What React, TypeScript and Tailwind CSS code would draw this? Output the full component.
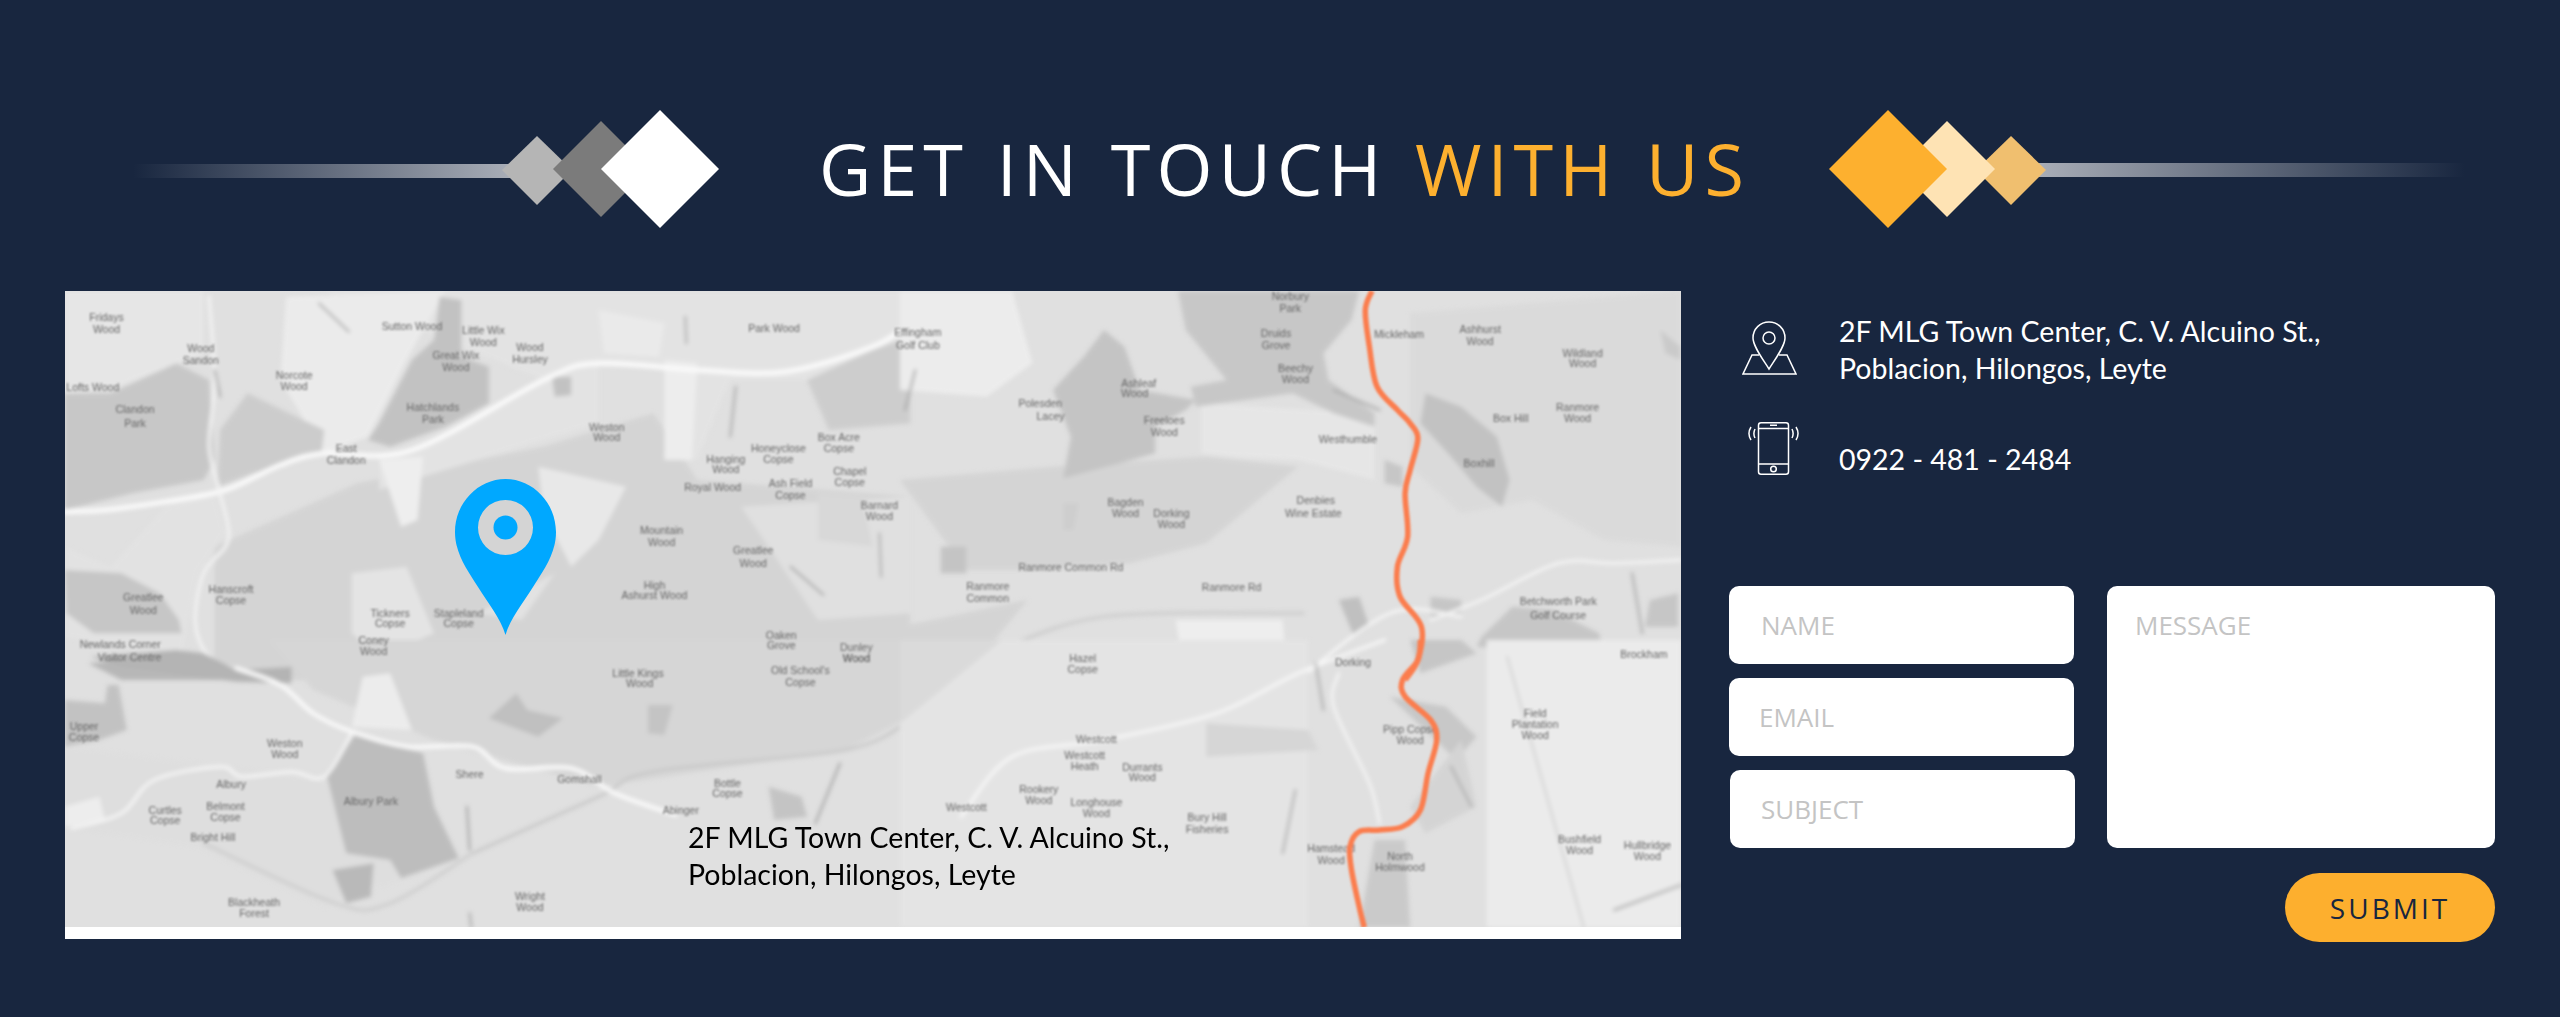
// catmull-rom through the traced points so roads don't look angular
const smooth = (pts: string) => {
  const p = pts.trim().split(" ").map(s => s.split(",").map(Number))
  let d = `M${p[0][0]} ${p[0][1]}`
  for (let i = 0; i < p.length - 1; i++) {
    const a = p[i - 1] || p[i], b = p[i], c = p[i + 1], e = p[i + 2] || c
    d += `C${b[0] + (c[0] - a[0]) / 6} ${b[1] + (c[1] - a[1]) / 6} ${c[0] - (e[0] - b[0]) / 6} ${c[1] - (e[1] - b[1]) / 6} ${c[0]} ${c[1]}`
  }
  return d
}

// map shapes are traced per quadrant, each group has its own scale
const Q1 = "translate(50 280) scale(.5486 .3333)"
const Q2 = "translate(900 280) scale(.5102 .3333)"
const Q3 = "translate(50 640) scale(.5486 .3333)"
const Q4 = "translate(900 640) scale(.5102 .3333)"

type Shape = [string, string]

const q1Fill: Shape[] = [
  ["#d4d4d4", "300,800 560,610 900,500 1100,400 1180,600 1568,650 1568,1200 300,1200"],
  ["#e3e3e3", "500,33 1568,33 1568,170 1380,300 1240,300 1180,540 1120,540 1130,260 1000,260 1000,430 600,630 600,520 660,510 900,300"],
  ["#e0e0e0", "1260,680 1568,650 1568,1000 1400,1020"],
  ["#e6e6e6", "27,33 280,33 280,220 110,330 27,340"],
  ["#ebebeb", "430,50 720,33 650,240 580,470 500,520 420,300"],
  ["#ededed", "1120,240 1180,250 1170,540 1120,540"],
  ["#eeeeee", "600,540 680,530 670,720 640,740"],
  ["#e8e8e8", "890,560 1050,620 1000,780 950,860 900,700"],
  ["#e2e2e2", "780,1000 920,880 860,1020"],
  ["#e4e4e4", "550,880 650,860 700,1060 600,1130 550,1060"],
  ["#e2e2e2", "27,800 110,860 210,680 300,640 320,760 270,880 240,1130 27,1070"],
  ["#c7c7c7", "27,340 110,340 230,250 290,300 300,540 280,600 150,640 27,690"],
  ["#cccccc", "360,340 500,450 495,520 370,580 305,620 310,450"],
  ["#c2c2c2", "710,50 750,60 750,230 800,260 800,370 720,440 620,500 580,480 600,430 660,240 700,180"],
  ["#c6c6c6", "27,870 130,880 200,940 235,1020 240,1060 80,1060 30,1000"],
  ["#b7b7b7", "70,1150 230,1130 290,1130 340,1170 440,1160 440,1200 130,1200"],
  ["#cdcdcd", "1380,300 1500,210 1568,170 1568,430 1420,450"],
  ["#c2c2c2", "915,290 950,290 950,345 920,350"],
  ["#eaeaea", "1000,90 1120,130 1110,230 1010,220"],
  ["#d8d8d8", "1400,640 1480,650 1500,800 1400,780"],
]
const q1Road: [string, number, string][] = [
  ["#fafafa", 5, "27,695 100,690 210,665 320,630 420,555 500,520 660,510 900,300 1000,250 1180,270 1340,275 1500,200 1568,130"],
  ["#f4f4f4", 3, "290,50 300,300 290,500 310,640 325,780 280,880 265,1030 290,1130 340,1170"],
  ["#a8a8a8", 2, "490,70 545,155"],
  ["#a0a0a0", 2, "300,270 310,350"],
  ["#a8a8a8", 2, "1250,320 1240,470"],
  ["#a8a8a8", 2, "1158,110 1160,190"],
  ["#a8a8a8", 2, "1512,760 1515,890"],
  ["#a0a0a0", 2, "1350,860 1410,945"],
]

const q2Fill: Shape[] = [
  ["#d4d4d4", "0,600 130,870 230,870 450,850 600,790 780,560 600,530 300,560"],
  ["#d4d4d4", "0,1040 250,960 120,1200 0,1200"],
  ["#ececec", "0,33 220,33 260,250 170,350 0,330"],
  ["#eeeeee", "540,1020 750,1020 760,1200 560,1200"],
  ["#e6e6e6", "590,370 930,400 930,600 780,540 650,530 590,520"],
  ["#dadada", "1000,100 1531,33 1531,800 1380,780 1240,660 1100,700 1000,560"],
  ["#ececec", "1180,1100 1531,1100 1531,1200 1180,1200"],
  ["#c7c7c7", "545,33 900,33 885,120 830,220 840,300 930,400 930,440 850,400 770,340 580,380 570,320 640,300 560,150"],
  ["#c4c4c4", "400,150 440,200 470,330 580,360 560,390 500,440 500,520 430,550 320,595 335,470 300,330 360,230"],
  ["#c2c2c2", "1030,340 1100,380 1170,470 1195,600 1180,680 1130,620 1080,530 1020,430"],
  ["#c6c6c6", "1140,1070 1200,980 1280,990 1370,1060 1380,1120 1130,1100"],
  ["#cacaca", "1490,150 1530,200 1530,240 1500,220"],
  ["#c6c6c6", "950,540 985,560 985,620 950,610"],
  ["#c6c6c6", "1040,950 1100,960 1100,1000 1040,1010"],
  ["#c4c4c4", "80,800 130,800 130,880 80,880"],
  ["#c6c6c6", "1470,960 1525,940 1525,1040 1460,1040"],
  ["#c0c0c0", "860,960 900,950 920,1040 890,1070"],
  ["#cecece", "320,670 350,670 340,750 320,750"],
]
const q2Road: [string, number, string][] = [
  ["#cccccc", 3, "180,1120 400,1010 790,1000"],
  ["#f6f6f6", 3, "780,1200 960,1000 1100,1010"],
  ["#f4f4f4", 3, "1040,1020 1140,960 1290,850 1400,850 1531,840"],
  ["#a0a0a0", 2, "30,270 10,390"],
  ["#a8a8a8", 2, "1435,880 1455,1060"],
  ["#a8a8a8", 2, "850,330 940,390"],
]

const q3Fill: Shape[] = [
  ["#d6d6d6", "400,0 1568,0 1568,230 1450,330 1000,440 700,300 480,150"],
  ["#dedede", "27,320 500,420 745,660 500,800 270,620 27,560"],
  ["#ececec", "570,110 620,100 660,270 550,260"],
  ["#ededed", "27,560 100,540 90,470 27,500"],
  ["#bdbdbd", "555,285 680,340 700,500 745,655 640,715 620,660 540,640 505,410"],
  ["#b9b9b9", "515,690 590,670 585,770 540,790"],
  ["#c2c2c2", "27,180 100,190 105,135 125,135 140,270 90,300 27,320"],
  ["#b4b4b4", "75,50 230,30 280,40 340,90 440,85 440,130 340,125 130,80"],
  ["#c0c0c0", "800,235 850,160 870,210 935,235 890,290"],
  ["#c4c4c4", "1090,195 1135,195 1120,285 1090,280"],
  ["#c4c4c4", "1310,440 1370,470 1380,530 1320,540"],
]
const q3Road: [string, number, string][] = [
  ["#c8c8c8", 3, "770,640 1000,470 1100,395 1450,330 1568,240"],
  ["#cdcdcd", 3, "280,610 520,790 620,790 770,640"],
  ["#fbfbfb", 4, "340,85 420,135 480,220 550,275 650,320 770,320 830,385 950,385 1030,460 1140,525"],
  ["#f6f6f6", 3, "550,280 500,410 440,395 350,410 310,380 190,420 130,520 40,565"],
  ["#a0a0a0", 2, "760,500 765,630"],
  ["#a0a0a0", 2, "1440,370 1395,550"],
  ["#a8a8a8", 2, "765,820 768,862"],
]

const q4Fill: Shape[] = [
  ["#e4e4e4", "0,0 800,0 800,862 0,862"],
  ["#ebebeb", "1150,0 1531,0 1531,862 1150,862"],
  ["#d6d6d6", "600,250 800,270 820,330 600,350"],
  ["#dadada", "0,0 200,0 0,250"],
  ["#c8c8c8", "960,170 1070,200 1130,290 1090,360 1050,300"],
  ["#cacaca", "930,600 990,600 1000,862 900,862"],
  ["#d4d4d4", "1000,500 1100,300 1130,500 1030,580"],
  ["#c6c6c6", "1000,0 1100,0 1130,40 1020,100"],
]
const q4Road: [string, number, string][] = [
  ["#f8f8f8", 3, "120,530 220,350 400,300 620,220 780,100 950,0"],
  ["#f4f4f4", 3, "860,100 850,200 920,430 940,550"],
  ["#a8a8a8", 2, "815,70 830,210"],
  ["#a8a8a8", 2, "775,450 750,640"],
  ["#a8a8a8", 2, "1080,380 1120,500"],
  ["#bcbcbc", 3, "1400,810 1531,735"],
  ["#d0d0d0", 2, "1190,50 1340,860"],
]

type Label = [number, number, string]

const q1Labels: Label[] = [
  [103, 112, "Fridays"], [103, 148, "Wood"], [660, 138, "Sutton Wood"], [790, 150, "Little Wix"], [790, 185, "Wood"],
  [875, 202, "Wood"], [875, 238, "Hursley"], [740, 225, "Great Wix"], [740, 262, "Wood"], [445, 285, "Norcote"], [445, 318, "Wood"],
  [275, 205, "Wood"], [275, 240, "Sandon"], [78, 320, "Lofts Wood"], [155, 388, "Clandon"], [155, 428, "Park"],
  [698, 380, "Hatchlands"], [698, 418, "Park"], [540, 505, "East"], [540, 540, "Clandon"], [1015, 440, "Weston"], [1015, 472, "Wood"],
  [1320, 145, "Park Wood"], [1232, 538, "Hanging"], [1232, 568, "Wood"], [1328, 505, "Honeyclose"], [1328, 538, "Copse"],
  [1208, 622, "Royal Wood"], [1350, 610, "Ash Field"], [1350, 645, "Copse"], [1458, 572, "Chapel"], [1458, 605, "Copse"],
  [1512, 675, "Barnard"], [1512, 708, "Wood"], [1438, 470, "Box Acre"], [1438, 505, "Copse"], [1115, 750, "Mountain"], [1115, 785, "Wood"],
  [1282, 810, "Greatlee"], [1282, 850, "Wood"], [1102, 915, "High"], [1102, 945, "Ashurst Wood"], [330, 928, "Hanscroft"], [330, 960, "Copse"],
  [170, 950, "Greatlee"], [170, 990, "Wood"], [620, 998, "Tickners"], [620, 1030, "Copse"], [745, 998, "Stapleland"], [745, 1030, "Copse"],
  [590, 1080, "Coney"], [590, 1112, "Wood"], [128, 1093, "Newlands Corner"], [145, 1130, "Visitor Centre"],
  [1333, 1065, "Oaken"], [1333, 1095, "Grove"], [1470, 1102, "Dunley"], [1470, 1135, "Wood"], [1072, 1178, "Little Kings"], [1368, 1170, "Old School's"],
]
const q2Labels: Label[] = [
  [765, 48, "Norbury"], [765, 85, "Park"], [737, 160, "Druids"], [737, 195, "Grove"], [775, 265, "Beechy"], [775, 298, "Wood"],
  [978, 162, "Mickleham"], [1137, 148, "Ashhurst"], [1137, 182, "Wood"], [1338, 220, "Wildland"], [1338, 250, "Wood"], [1328, 380, "Ranmore"], [1328, 413, "Wood"],
  [1197, 415, "Box Hill"], [1135, 550, "Boxhill"], [878, 478, "Westhumble"], [275, 368, "Polesden"], [295, 408, "Lacey"],
  [468, 310, "Ashleaf"], [460, 340, "Wood"], [518, 420, "Freeloes"], [518, 455, "Wood"], [442, 665, "Bagden"], [442, 698, "Wood"],
  [532, 698, "Dorking"], [532, 733, "Wood"], [815, 660, "Denbies"], [810, 700, "Wine Estate"], [335, 860, "Ranmore Common Rd"],
  [172, 918, "Ranmore"], [172, 955, "Common"], [650, 920, "Ranmore Rd"], [888, 1145, "Dorking"], [1290, 962, "Betchworth Park"], [1290, 1005, "Golf Course"],
  [1458, 1122, "Brockham"], [35, 155, "Effingham"], [35, 195, "Golf Club"],
]
const q3Labels: Label[] = [
  [330, 432, "Albury"], [428, 310, "Weston"], [428, 342, "Wood"], [585, 482, "Albury Park"], [765, 403, "Shere"], [965, 418, "Gomshall"],
  [320, 498, "Belmont"], [320, 532, "Copse"], [210, 510, "Curtles"], [210, 540, "Copse"], [297, 590, "Bright Hill"], [372, 785, "Blackheath"], [372, 818, "Forest"],
  [875, 768, "Wright"], [875, 800, "Wood"], [1075, 130, "Wood"], [1368, 125, "Copse"], [1235, 428, "Bottle"], [1235, 460, "Copse"], [1470, 55, "Wood"],
  [62, 258, "Upper"], [62, 290, "Copse"], [1150, 510, "Abinger"],
]
const q4Labels: Label[] = [
  [358, 55, "Hazel"], [358, 88, "Copse"], [385, 297, "Westcott"], [362, 345, "Westcott"], [362, 378, "Heath"], [475, 380, "Durrants"], [475, 410, "Wood"],
  [272, 448, "Rookery"], [272, 480, "Wood"], [130, 500, "Westcott"], [385, 485, "Longhouse"], [385, 518, "Wood"], [602, 530, "Bury Hill"], [602, 568, "Fisheries"],
  [845, 625, "Hamstead"], [845, 660, "Wood"], [980, 648, "North"], [980, 682, "Holmwood"], [1000, 268, "Pipp Copse"], [1000, 300, "Wood"],
  [1245, 218, "Field"], [1245, 253, "Plantation"], [1245, 285, "Wood"], [1332, 597, "Bushfield"], [1332, 630, "Wood"], [1465, 615, "Hullbridge"], [1465, 648, "Wood"],
]

const ROUTE_TOP = "925,33 912,90 920,200 935,320 975,390 1000,430 1015,475 1000,570 990,640 995,770 975,860 980,950 1022,1040 1015,1140 990,1200"
const ROUTE_BOTTOM = "1020,0 1015,60 985,120 990,170 1040,240 1052,300 1035,400 1020,510 985,560 940,570 900,575 882,620 885,690 900,800 910,862"

const Layer = ({ transform, fills, roads }: { transform: string; fills: Shape[]; roads: [string, number, string][] }) => (
  <g transform={transform}>
    {fills.map(([c, p], i) => <polygon key={i} points={p} fill={c} />)}
    {roads.map(([c, w, p], i) => (
      <path key={i} d={smooth(p)} fill="none" stroke={c} strokeWidth={w} strokeLinecap="round" vectorEffect="non-scaling-stroke" />
    ))}
  </g>
)

const Labels = ({ ox, oy, sx, items }: { ox: number; oy: number; sx: number; items: Label[] }) => (
  <>
    {items.map(([x, y, t], i) => (
      <text key={i} x={ox + x / sx} y={oy + y / 3 + 4} textAnchor="middle" fontSize="10.5" fontFamily="'Liberation Sans', sans-serif" fill="#666666">{t}</text>
    ))}
  </>
)

const MapDrawing = () => (
  <svg viewBox="65 291 1616 636" className="block w-[1616px] h-[636px]">
    <defs>
      <filter id="soft" x="0" y="0" width="100%" height="100%"><feGaussianBlur stdDeviation="2" /></filter>
      <filter id="softer" x="0" y="0" width="100%" height="100%"><feGaussianBlur stdDeviation="0.9" /></filter>
      <clipPath id="mapclip"><rect x="65" y="291" width="1616" height="636" /></clipPath>
    </defs>
    <g clipPath="url(#mapclip)">
      <rect x="65" y="291" width="1616" height="636" fill="#e0e0e0" />
      <g filter="url(#soft)">
        <Layer transform={Q1} fills={q1Fill} roads={q1Road} />
        <Layer transform={Q2} fills={q2Fill} roads={q2Road} />
        <Layer transform={Q3} fills={q3Fill} roads={q3Road} />
        <Layer transform={Q4} fills={q4Fill} roads={q4Road} />
      </g>
      <g filter="url(#softer)">
        <Labels ox={50} oy={280} sx={1.823} items={q1Labels} />
        <Labels ox={900} oy={280} sx={1.96} items={q2Labels} />
        <Labels ox={50} oy={640} sx={1.823} items={q3Labels} />
        <Labels ox={900} oy={640} sx={1.96} items={q4Labels} />
        <g transform={Q2}>
          <path d={smooth(ROUTE_TOP)} fill="none" stroke="#fb7d4d" strokeWidth="5.5" vectorEffect="non-scaling-stroke" />
        </g>
        <g transform={Q4}>
          <path d={smooth(ROUTE_BOTTOM)} fill="none" stroke="#fb7d4d" strokeWidth="5.5" vectorEffect="non-scaling-stroke" />
        </g>
      </g>
    </g>
  </svg>
)

const Pin = () => (
  <svg viewBox="0 0 101 156" className="absolute left-[390px] top-[188px] w-[101px] h-[156px]">
    <path fillRule="evenodd" fill="#00a8ff" d="M50.5 0C78 0 101 24 101 53C101 75 88 92 78 108C68 124 55 140 50.5 156C46 140 33 124 23 108C13 92 0 75 0 53C0 24 23 0 50.5 0ZM50.5 21A27.5 27.5 0 1 0 50.5 76A27.5 27.5 0 1 0 50.5 21Z" />
    <circle cx="50.5" cy="48.5" r="12" fill="#00a8ff" />
  </svg>
)

const LeftDiamonds = () => (
  <svg viewBox="0 0 217 118" className="relative w-[217px] h-[118px] shrink-0 -ml-[10px]">
    <polygon points="0,60 35,26 70,60 35,95" fill="#b5b5b5" />
    <polygon points="51,59 99,11 147,59 99,107" fill="#7b7b7b" />
    <polygon points="99,59 158,0 217,59 158,118" fill="#ffffff" />
  </svg>
)

const RightDiamonds = () => (
  <svg viewBox="0 0 217 118" className="relative w-[217px] h-[118px] shrink-0 -mr-[10px]">
    <polygon points="147,60 182,26 217,60 182,95" fill="#f0bf6f" />
    <polygon points="70,59 118,11 166,59 118,107" fill="#fee3b4" />
    <polygon points="0,59 59,0 118,59 59,118" fill="#fdb02f" />
  </svg>
)

const PinIcon = () => (
  <svg viewBox="0 0 55 54" className="w-[55px] h-[54px]" fill="none" stroke="#fff" strokeWidth="1.5">
    <path d="M27 1C18 1 11 8 11 17C11 25 20 37 27 48C34 37 43 25 43 17C43 8 36 1 27 1Z" />
    <circle cx="27" cy="17" r="6" />
    <path d="M17 34H10L1 53H54L45 34H37" />
  </svg>
)

const PhoneIcon = () => (
  <svg viewBox="0 0 55 53" className="w-[55px] h-[53px]" fill="none" stroke="#fff" strokeWidth="1.5">
    <rect x="12.5" y="0.75" width="30" height="51.5" rx="2.5" />
    <path d="M13 6.5H42M13 42H42M24 3.2H31" />
    <circle cx="27.5" cy="47" r="2.8" />
    <path d="M5 5C2.5 9 2.5 14 5 18M9 7C7.5 10 7.5 13 9 16M50 5C52.5 9 52.5 14 50 18M46 7C47.5 10 47.5 13 46 16" />
  </svg>
)

const inputBox = "bg-white rounded-[10px] h-[78px] w-[345px] flex items-center text-[26px] text-[#c4c4c4] font-['Open_Sans',sans-serif]"

export default function App() {
  return (
    <div className="w-[2560px] h-[1017px] overflow-hidden bg-[#18263f] pt-[110px]">
      <div className="flex items-center h-[118px]">
        <div className="flex items-center w-[719px] pl-[133px] shrink-0">
          <div className="h-[14px] w-[379px] mt-[4px] bg-gradient-to-r from-transparent to-[#a9aeb8]" />
          <LeftDiamonds />
        </div>
        <h1 className="ml-[100px] w-[1010px] -mt-[2px] shrink-0 text-[72px] leading-none tracking-[6px] [word-spacing:3px] text-white font-['Open_Sans',sans-serif] whitespace-nowrap">
          GET IN TOUCH <span className="text-[#fdb02f]">WITH US</span>
        </h1>
        <div className="flex items-center shrink-0">
          <RightDiamonds />
          <div className="h-[14px] w-[429px] mt-[2px] bg-gradient-to-l from-transparent to-[#a9aeb8]" />
        </div>
      </div>

      <div className="flex mt-[63px] pl-[65px]">
        <div className="relative w-[1616px] h-[648px] bg-white shrink-0">
          <MapDrawing />
          <Pin />
          <p className="absolute left-[623px] top-[528px] text-[28.5px] leading-[37px] text-black font-['Lato',sans-serif] whitespace-nowrap">
            2F MLG Town Center, C. V. Alcuino St.,<br />Poblacion, Hilongos, Leyte
          </p>
        </div>

        <div className="ml-[48px] w-[766px] shrink-0">
          <div className="flex pl-[13px] pt-[30px]">
            <PinIcon />
            <p className="ml-[42px] -mt-[8px] text-[28.5px] leading-[37px] text-white font-['Lato',sans-serif] whitespace-nowrap">
              2F MLG Town Center, C. V. Alcuino St.,<br />Poblacion, Hilongos, Leyte
            </p>
          </div>
          <div className="flex pl-[17px] mt-[35px] h-[53px]">
            <PhoneIcon />
            <p className="ml-[38px] mt-[19px] text-[28.5px] leading-[37px] text-white font-['Lato',sans-serif] whitespace-nowrap">0922 - 481 - 2484</p>
          </div>

          <div className="flex gap-[32px] mt-[111px]">
            <div className="flex flex-col gap-[14px]">
              <div className={`${inputBox} pl-[32px]`}>NAME</div>
              <div className={`${inputBox} pl-[30px]`}>EMAIL</div>
              <div className={`${inputBox} pl-[31px] ml-[1px]`}>SUBJECT</div>
            </div>
            <div className="bg-white rounded-[10px] w-[388px] h-[262px] pl-[28px] pt-[20px] text-[26px] leading-[38px] text-[#c4c4c4] font-['Open_Sans',sans-serif]">MESSAGE</div>
          </div>

          <div className="flex justify-end mt-[25px]">
            <button className="w-[210px] h-[69px] rounded-full bg-[#fdaf2e] text-[#18263f] text-[28px] tracking-[3px] font-['Open_Sans',sans-serif]">SUBMIT</button>
          </div>
        </div>
      </div>
    </div>
  )
}
